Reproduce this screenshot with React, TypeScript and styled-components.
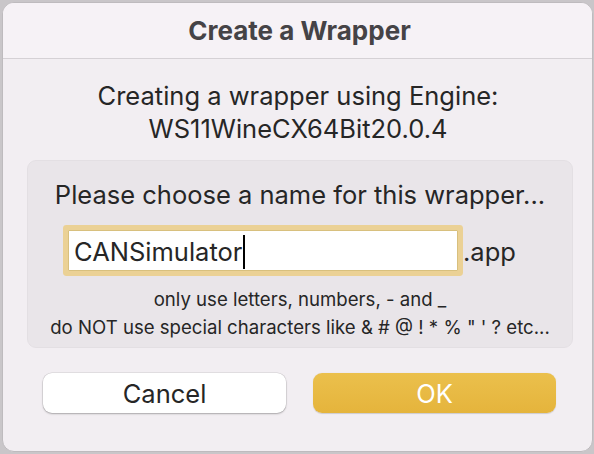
import React from "react";
import styled, { createGlobalStyle } from "styled-components";

const Global = createGlobalStyle`
  html, body {
    margin: 0;
    padding: 0;
    background: #c9c6c9;
  }
  body {
    font-family: Inter, "Noto Sans", "Liberation Sans", sans-serif;
    -webkit-font-smoothing: antialiased;
  }
`;

const Stage = styled.div`
  width: 594px;
  height: 454px;
  padding: 2px 1px 2px 2px;
  box-sizing: border-box;
`;

const Window = styled.div`
  width: 591px;
  height: 450px;
  box-sizing: border-box;
  border: 1px solid #bebbbe;
  border-radius: 12px;
  background: #f2eef2;
  overflow: hidden;
  display: flex;
  flex-direction: column;
`;

const TitleBar = styled.div`
  height: 56px;
  box-sizing: border-box;
  background: #f6f2f6;
  border-bottom: 1px solid #d5d1d5;
  display: flex;
  align-items: center;
  justify-content: center;
  padding-left: 4px;
  font-size: 26px;
  font-weight: 700;
  color: #454346;
`;

const Content = styled.div`
  flex: 1;
  display: flex;
  flex-direction: column;
  padding: 20px 19px 0 24px;
`;

const Message = styled.div`
  text-align: center;
  font-size: 25.5px;
  line-height: 33px;
  color: #262626;
  padding-right: 4px;
`;

const Panel = styled.div`
  margin-top: 15px;
  height: 188px;
  box-sizing: border-box;
  background: #e9e5e9;
  border: 1px solid #e3dfe3;
  border-radius: 9px;
  display: flex;
  flex-direction: column;
  align-items: center;
  padding-top: 18px;
`;

const Prompt = styled.div`
  font-size: 25.5px;
  line-height: 32px;
  color: #262626;
`;

const FieldRow = styled.div`
  margin-top: 18px;
  display: flex;
  align-items: center;
  align-self: flex-start;
  margin-left: 40px;
`;

const Field = styled.div`
  width: 390px;
  height: 41px;
  box-sizing: border-box;
  background: #ffffff;
  border: 1px solid #d8c07e;
  box-shadow: 0 0 0 5px #ebd195;
  border-radius: 1px;
  display: flex;
  align-items: center;
  padding: 2px 0 0 5px;
  font-size: 25.5px;
  color: #262626;
`;

const Caret = styled.span`
  display: inline-block;
  width: 2px;
  height: 34px;
  background: #000;
  margin-left: 1px;
`;

const Suffix = styled.span`
  margin-left: 5px;
  padding-top: 2px;
  font-size: 25.5px;
  line-height: 41px;
  color: #262626;
`;

const Hints = styled.div`
  margin-top: 13px;
  text-align: center;
  font-size: 18.6px;
  line-height: 28px;
  color: #262626;
`;

const Buttons = styled.div`
  margin-top: 25px;
  display: flex;
  gap: 27px;
  padding-left: 16px;
`;

const Button = styled.button<{ $primary?: boolean }>`
  width: 243px;
  height: 40px;
  border: none;
  border-radius: 9px;
  font-family: inherit;
  font-size: 25.5px;
  cursor: pointer;
  color: ${(p) => (p.$primary ? "#ffffff" : "#262626")};
  background: ${(p) =>
    p.$primary ? "linear-gradient(#ebc04c, #e5b43c)" : "#ffffff"};
  box-shadow: ${(p) =>
    p.$primary
      ? "0 0.5px 1px rgba(0,0,0,0.15)"
      : "0 0 0 0.5px rgba(0,0,0,0.12), 0 1px 2px rgba(0,0,0,0.25)"};
`;

export default function App() {
  return (
    <>
      <Global />
      <Stage>
        <Window>
          <TitleBar>Create a Wrapper</TitleBar>
          <Content>
            <Message>
              Creating a wrapper using Engine:
              <br />
              WS11WineCX64Bit20.0.4
            </Message>
            <Panel>
              <Prompt>Please choose a name for this wrapper...</Prompt>
              <FieldRow>
                <Field>
                  CANSimulator
                  <Caret />
                </Field>
                <Suffix>.app</Suffix>
              </FieldRow>
              <Hints>
                only use letters, numbers, - and _
                <br />
                do NOT use special characters like &amp; # @ ! * % " ' ? etc...
              </Hints>
            </Panel>
            <Buttons>
              <Button>Cancel</Button>
              <Button $primary>OK</Button>
            </Buttons>
          </Content>
        </Window>
      </Stage>
    </>
  );
}
